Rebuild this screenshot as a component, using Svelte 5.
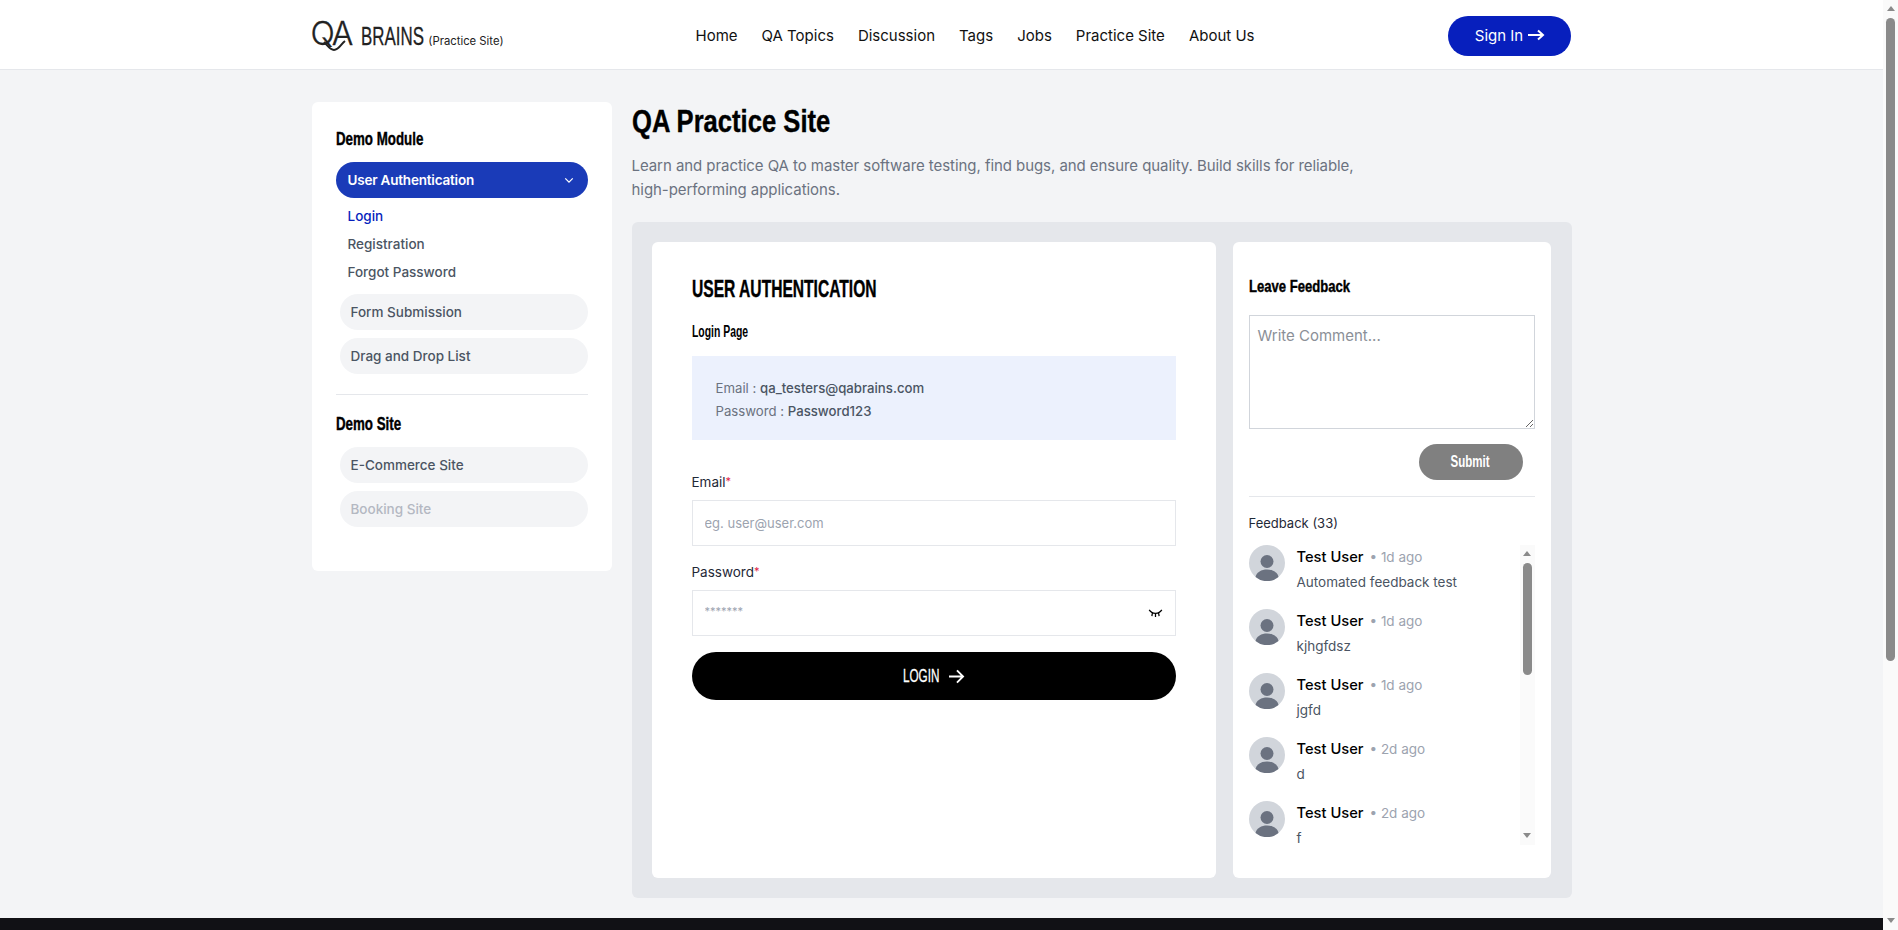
<script>
  // sidebar + feedback data
  const moduleLinks = ['Login', 'Registration', 'Forgot Password'];
  const navLinks = ['Home', 'QA Topics', 'Discussion', 'Tags', 'Jobs', 'Practice Site', 'About Us'];
  const feedback = [
    { time: '1d ago', text: 'Automated feedback test' },
    { time: '1d ago', text: 'kjhgfdsz' },
    { time: '1d ago', text: 'jgfd' },
    { time: '2d ago', text: 'd' },
    { time: '2d ago', text: 'f' }
  ];
</script>

<div class="window">
  <div class="page">
    <header class="topbar">
      <div class="container topbar-row">
        <a class="logo" href="#top">
          <span class="logo-mark">QA<svg class="swash" viewBox="0 0 30 14" aria-hidden="true"><path d="M1 4c3 3 6 8 10 8 5 0 7-6 11-9" /></svg></span>
          <span class="logo-name">BRAINS</span>
          <span class="logo-sub">(Practice Site)</span>
        </a>
        <nav class="nav">
          {#each navLinks as link}
            <a href="#top">{link}</a>
          {/each}
        </nav>
        <button class="signin">Sign In
          <svg viewBox="0 0 18 12" width="18" height="12" aria-hidden="true"><path d="M1 6h15M11 1.500 16 6l-5 4.500" /></svg>
        </button>
      </div>
    </header>

    <main class="container content">
      <aside class="sidebar">
        <h3>Demo Module</h3>
        <div class="pill active">
          <span>User Authentication</span>
          <svg viewBox="0 0 12 8" width="10" height="7" aria-hidden="true"><path d="M1.500 1.500 6 6l4.500-4.500" /></svg>
        </div>
        <ul class="sublinks">
          {#each moduleLinks as link, i}
            <li class:current={i === 0}>{link}</li>
          {/each}
        </ul>
        <div class="pill">Form Submission</div>
        <div class="pill">Drag and Drop List</div>
        <hr />
        <h3>Demo Site</h3>
        <div class="pill">E-Commerce Site</div>
        <div class="pill disabled">Booking Site</div>
      </aside>

      <section class="main">
        <h1>QA Practice Site</h1>
        <p class="lead">Learn and practice QA to master software testing, find bugs, and ensure quality. Build skills for reliable, high-performing applications.</p>

        <div class="panel">
          <div class="card login">
            <h2>USER AUTHENTICATION</h2>
            <h4>Login Page</h4>
            <div class="creds">
              <div>Email : <b>qa_testers@qabrains.com</b></div>
              <div>Password : <b>Password123</b></div>
            </div>
            <label for="email">Email<i>*</i></label>
            <input id="email" type="text" placeholder="eg. user@user.com" />
            <label for="password">Password<i>*</i></label>
            <div class="pass">
              <input id="password" type="text" placeholder="*******" />
              <svg class="eye" viewBox="0 0 16 10" width="15" height="9" aria-hidden="true"><path d="M1 1c3 5 11 5 14 0M4.500 4.500 4 8M8 5.500V9M11.500 4.500 12 8" /></svg>
            </div>
            <button class="login-btn"><span>LOGIN</span>
              <svg viewBox="0 0 18 16" width="17" height="15" aria-hidden="true"><path d="M1 8h15M9.500 1.500 16 8l-6.500 6.500" /></svg>
            </button>
          </div>

          <div class="card side">
            <h3>Leave Feedback</h3>
            <textarea placeholder="Write Comment..."></textarea>
            <div class="submit-row"><button class="submit"><span>Submit</span></button></div>
            <hr />
            <div class="count">Feedback (33)</div>
            <div class="list-wrap">
              <div class="list">
                {#each feedback as item}
                  <div class="comment">
                    <svg class="avatar" viewBox="0 0 36 36" aria-hidden="true">
                      <circle cx="18" cy="18" r="18" fill="#d1d5db" />
                      <circle cx="18" cy="16.500" r="6.500" fill="#6b7280" />
                      <path d="M6.500 32c1-5 6-7.500 11.500-7.500s10.500 2.500 11.500 7.500A18 18 0 0 1 6.500 32z" fill="#6b7280" />
                    </svg>
                    <div>
                      <div class="who"><strong>Test User</strong><span>• {item.time}</span></div>
                      <div class="msg">{item.text}</div>
                    </div>
                  </div>
                {/each}
              </div>
              <div class="track small">
                <span class="up"></span>
                <span class="thumb"></span>
                <span class="down"></span>
              </div>
            </div>
          </div>
        </div>
      </section>
    </main>
    <footer class="foot"></footer>
  </div>
  <div class="track page-track">
    <span class="up"></span>
    <span class="thumb"></span>
    <span class="down"></span>
  </div>
</div>

<style>
  :global(body) {
    margin: 0;
    overflow: hidden;
    background: #f3f4f6;
  }

  .window {
    display: flex;
    height: 930px;
    font-family: "Inter", "Liberation Sans", sans-serif;
    color: #000;
  }

  .page {
    flex: 1;
    min-width: 0;
    height: 930px;
    overflow: hidden;
    background: #f3f4f6;
  }

  .container {
    width: 1260px;
    margin: 0 auto;
  }

  /* no condensed face installed, so headings get squeezed horizontally */
  h1, h2, h3, h4 {
    font-family: "Liberation Sans", sans-serif;
    font-weight: 700;
    margin: 0;
    color: #000;
    transform-origin: left center;
    white-space: nowrap;
    -webkit-text-stroke: 0.4px #000;
  }

  /* header */
  .topbar {
    height: 69px;
    background: #fff;
    border-bottom: 1px solid #e5e7eb;
  }

  .topbar-row {
    height: 69px;
    box-sizing: border-box;
    padding-top: 3px;
    display: flex;
    align-items: center;
    justify-content: space-between;
  }

  .logo {
    width: 192px;
    margin-top: -5px;
    display: flex;
    align-items: baseline;
    color: #222;
    text-decoration: none;
  }

  .logo-mark {
    position: relative;
    width: 44px;
    margin-left: -1px;
    font-size: 32px;
    font-weight: 300;
    letter-spacing: -2px;
    line-height: 36px;
    -webkit-text-stroke: 0.3px #222;
  }

  .swash {
    position: absolute;
    left: 12px;
    bottom: 0;
    width: 30px;
    height: 14px;
    fill: none;
    stroke: #222;
    stroke-width: 2;
  }

  .logo-name {
    width: 63px;
    margin-left: 7px;
    font-family: "Liberation Sans", sans-serif;
    font-size: 26px;
    white-space: nowrap;
    transform: scaleX(0.65);
    transform-origin: left center;
    -webkit-text-stroke: 0.3px #222;
  }

  .logo-sub {
    font-size: 11.300px;
    margin-left: 4px;
    white-space: nowrap;
  }

  .nav {
    display: flex;
    gap: 24px;
    margin-top: -2px;
    margin-right: 2px;
  }

  .nav a {
    font-size: 15px;
    color: #111;
    text-decoration: none;
  }

  .signin {
    width: 123px;
    height: 40px;
    padding: 0 0 2px;
    display: flex;
    align-items: center;
    justify-content: center;
    gap: 4px;
    border: 0;
    border-radius: 20px;
    background: #071fbd;
    color: #fff;
    font: inherit;
    font-size: 15px;
  }

  .signin svg, .login-btn svg {
    fill: none;
    stroke: #fff;
    stroke-width: 2;
  }

  /* layout */
  .content {
    display: flex;
    gap: 20px;
    padding-top: 32px;
    align-items: flex-start;
  }

  .sidebar {
    width: 300px;
    height: 469px;
    box-sizing: border-box;
    padding: 25px 24px;
    background: #fff;
    border-radius: 6px;
  }

  .sidebar h3 {
    font-size: 18px;
    line-height: 24px;
    margin-bottom: 11px;
    transform: scaleX(0.74);
  }

  .pill {
    height: 36px;
    margin: 0 0 8px 4px;
    padding: 0 12px 0 11px;
    display: flex;
    align-items: center;
    justify-content: space-between;
    border-radius: 18px;
    background: #f3f4f6;
    color: #4b5563;
    font-size: 13.500px;
    font-weight: 500;
  }

  .pill.active {
    margin: 0;
    padding-left: 12px;
    padding-right: 14px;
    background: #1a3bb8;
    color: #fff;
    font-weight: 600;
    letter-spacing: -0.2px;
  }

  .pill.active svg {
    fill: none;
    stroke: #fff;
    stroke-width: 1.500;
  }

  .pill.disabled {
    color: #b4b8c2;
    margin-bottom: 0;
  }

  .sublinks {
    list-style: none;
    margin: 4px 0 8px;
    padding: 0 0 0 12px;
    font-size: 13.500px;
    font-weight: 500;
    color: #4b5563;
  }

  .sublinks li {
    line-height: 28px;
  }

  .sublinks li.current {
    color: #071fbd;
  }

  hr {
    border: 0;
    border-top: 1px solid #e5e7eb;
    margin: 20px 0 17px;
  }

  .main {
    flex: 1;
    min-width: 0;
  }

  h1 {
    font-size: 32px;
    line-height: 38px;
    transform: scaleX(0.8);
  }

  .lead {
    width: 740px;
    margin: 14px 0 20px;
    font-size: 15px;
    line-height: 24px;
    letter-spacing: -0.06px;
    color: #6b7280;
  }

  .panel {
    height: 676px;
    box-sizing: border-box;
    padding: 20px;
    display: flex;
    gap: 17px;
    background: #e5e7eb;
    border-radius: 6px;
  }

  .card {
    background: #fff;
    border-radius: 6px;
    box-sizing: border-box;
    height: 636px;
  }

  /* login card */
  .login {
    width: 564px;
    padding: 32px 40px;
  }

  .login h2 {
    font-size: 24px;
    line-height: 30px;
    transform: scaleX(0.65);
  }

  .login h4 {
    margin-top: 17px;
    font-size: 16px;
    line-height: 22px;
    transform: scaleX(0.65);
    -webkit-text-stroke: 0;
  }

  .creds {
    margin: 13px 0 29px;
    height: 84px;
    box-sizing: border-box;
    padding: 21px 24px;
    background: #ecf1fd;
    color: #6b7280;
    font-size: 13.200px;
    line-height: 23px;
  }

  .creds b {
    font-weight: 500;
    color: #4b5563;
  }

  label {
    display: block;
    font-size: 13.500px;
    line-height: 24px;
    margin-bottom: 6px;
    color: #1f2937;
  }

  label i {
    color: #e11d48;
    font-style: normal;
    font-size: 11px;
    vertical-align: 2px;
  }

  input {
    display: block;
    width: 100%;
    height: 46px;
    box-sizing: border-box;
    padding: 0 12px;
    border: 1px solid #e5e7eb;
    border-radius: 0;
    outline: none;
    font: inherit;
    font-size: 13px;
    margin-bottom: 13px;
  }

  input::placeholder {
    color: #9ca3af;
  }

  .pass {
    position: relative;
    margin-bottom: 16px;
  }

  .pass input {
    margin: 0;
    padding-bottom: 6px;
  }

  .pass input::placeholder {
    font-size: 11px;
  }

  .eye {
    position: absolute;
    right: 13px;
    top: 19px;
    fill: none;
    stroke: #000;
    stroke-width: 1.400;
  }

  .login-btn {
    width: 100%;
    height: 48px;
    display: flex;
    align-items: center;
    justify-content: center;
    gap: 9px;
    border: 0;
    border-radius: 24px;
    background: #000;
    color: #fff;
    font-family: "Liberation Sans", sans-serif;
    font-size: 18px;
  }

  .login-btn span {
    width: 36px;
    white-space: nowrap;
    text-align: left;
    transform: scaleX(0.65);
    transform-origin: left center;
    -webkit-text-stroke: 0.3px #fff;
  }

  /* feedback card */
  .side {
    width: 318px;
    padding: 33px 16px 0;
  }

  .side h3 {
    font-size: 17px;
    line-height: 24px;
    margin-bottom: 16px;
    transform: scaleX(0.77);
  }

  textarea {
    display: block;
    width: 100%;
    height: 114px;
    box-sizing: border-box;
    padding: 10px 8px 8px;
    border: 1px solid #d1d5db;
    border-radius: 0;
    outline: none;
    font: inherit;
    font-size: 15px;
    line-height: 20px;
  }

  textarea::placeholder {
    color: #8b8f97;
  }

  .submit-row {
    display: flex;
    justify-content: flex-end;
    padding: 15px 12px 0 0;
  }

  .submit {
    width: 104px;
    height: 36px;
    border: 0;
    border-radius: 18px;
    background: #808080;
    color: #fff;
    font-family: "Liberation Sans", sans-serif;
    font-size: 16px;
    font-weight: 700;
  }

  .submit span {
    display: inline-block;
    transform: scaleX(0.72);
  }

  .side hr {
    margin: 16px 0 16px;
  }

  .count {
    font-size: 13px;
    line-height: 20px;
    color: #1f2937;
    margin-bottom: 12px;
  }

  .list-wrap {
    display: flex;
    height: 300px;
  }

  .list {
    flex: 1;
    overflow: hidden;
  }

  .comment {
    display: flex;
    gap: 12px;
    height: 64px;
  }

  .avatar {
    width: 36px;
    height: 36px;
    flex: none;
  }

  .who {
    display: flex;
    align-items: baseline;
    gap: 6px;
    line-height: 24px;
  }

  .who strong {
    font-size: 14.700px;
    font-weight: 500;
  }

  .who span {
    font-size: 13.500px;
    color: #9ca3af;
  }

  .msg {
    margin-top: 3px;
    font-size: 13.500px;
    line-height: 20px;
    color: #4b5563;
  }

  /* scrollbars */
  .track {
    display: flex;
    flex-direction: column;
    align-items: center;
    background: #fafafa;
    flex: none;
    width: 15px;
  }

  .page-track {
    height: 930px;
  }

  .thumb {
    width: 9px;
    border-radius: 5px;
    background: #8a8a8a;
    margin-top: 7px;
    height: 643px;
  }

  .small .thumb {
    height: 112px;
  }

  .up, .down {
    width: 0;
    height: 0;
    margin-top: 6px;
    border-left: 4.500px solid transparent;
    border-right: 4.500px solid transparent;
  }

  .up {
    border-bottom: 5px solid #8a8a8a;
  }

  .down {
    margin-top: auto;
    margin-bottom: 7px;
    border-top: 5px solid #8a8a8a;
  }

  .foot {
    height: 200px;
    margin-top: 20px;
    background: #111115;
  }
</style>
